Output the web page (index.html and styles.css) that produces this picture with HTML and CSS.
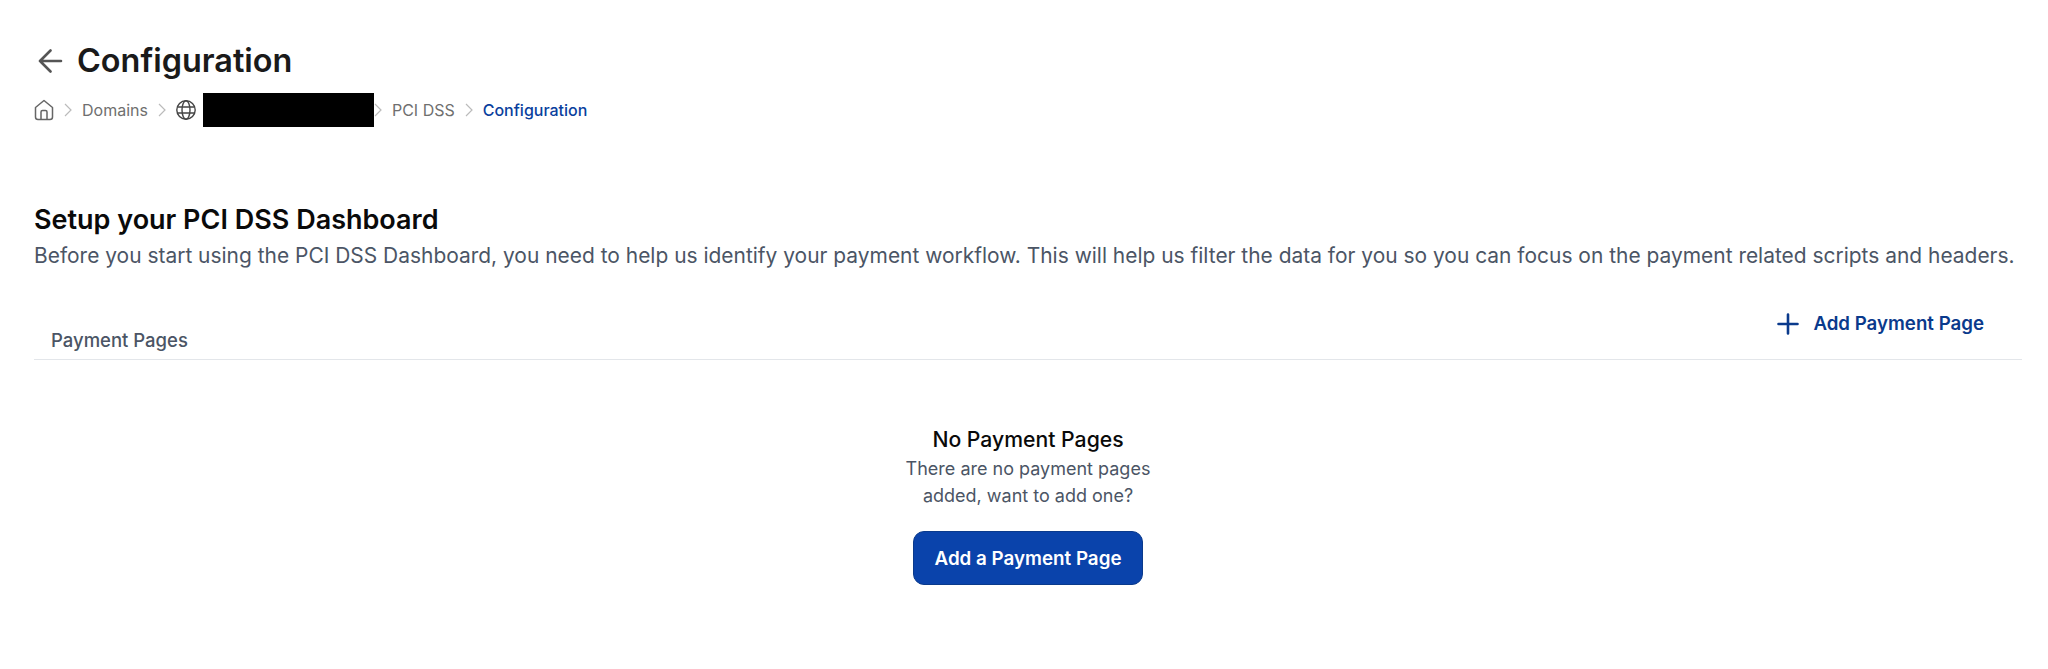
FILE: index.html
```html
<!DOCTYPE html>
<html lang="en">
<head>
  <meta charset="UTF-8">
  <title>Configuration</title>
  <link rel="stylesheet" href="styles.css">
</head>
<body>
  <div class="page">
    <div class="title-row">
      <svg class="back" viewBox="0 0 26 24" fill="none" stroke="#555" stroke-width="2.6" stroke-linecap="round" stroke-linejoin="round"><path d="M23 12H2M12.5 1.5 2 12l10.5 10.5"/></svg>
      <h1>Configuration</h1>
    </div>
    <div class="crumbs">
      <svg class="home" viewBox="0 0 20 22" fill="none" stroke="#666" stroke-width="1.5" stroke-linejoin="round"><path d="M1.5 8.5 10 1.5l8.5 7V18a2.5 2.5 0 0 1-2.5 2.5H4A2.5 2.5 0 0 1 1.5 18z"/><path d="M7 20.5V13a1.5 1.5 0 0 1 1.5-1.5h3A1.5 1.5 0 0 1 13 13v7.5"/></svg>
      <svg class="sep" viewBox="0 0 8 14" fill="none" stroke="#bbb" stroke-width="1.2"><path d="m1 1 6 6-6 6"/></svg>
      <span>Domains</span>
      <svg class="sep" viewBox="0 0 8 14" fill="none" stroke="#bbb" stroke-width="1.2"><path d="m1 1 6 6-6 6"/></svg>
      <svg class="globe" viewBox="0 0 20 20" fill="none" stroke="#444" stroke-width="1.4"><circle cx="10" cy="10" r="9.2"/><ellipse cx="10" cy="10" rx="4" ry="9.2"/><path d="M1.5 7h17M1.5 13h17"/></svg>
      <span class="redacted"></span>
      <svg class="sep tight" viewBox="0 0 8 14" fill="none" stroke="#bbb" stroke-width="1.2"><path d="m1 1 6 6-6 6"/></svg>
      <span>PCI DSS</span>
      <svg class="sep" viewBox="0 0 8 14" fill="none" stroke="#bbb" stroke-width="1.2"><path d="m1 1 6 6-6 6"/></svg>
      <span class="current">Configuration</span>
    </div>

    <h2>Setup your PCI DSS Dashboard</h2>
    <p class="intro">Before you start using the PCI DSS Dashboard, you need to help us identify your payment workflow. This will help us filter the data for you so you can focus on the payment related scripts and headers.</p>

    <div class="tab-row">
      <span class="tab">Payment Pages</span>
      <a class="add-link">
        <svg viewBox="0 0 22 22" fill="none" stroke="#0a3a8c" stroke-width="2.6" stroke-linecap="round"><path d="M11 1.5v19M1.5 11h19"/></svg>
        Add Payment Page
      </a>
    </div>

    <div class="empty">
      <h3>No Payment Pages</h3>
      <p>There are no payment pages<br>added, want to add one?</p>
      <button class="btn">Add a Payment Page</button>
    </div>
  </div>
</body>
</html>
```

FILE: styles.css
```css
*{margin:0;padding:0;box-sizing:border-box;}
html,body{width:100%;height:100%;background:#fff;overflow:hidden;}
body{font-family:"Inter","Liberation Sans",sans-serif;color:#111;}
.page{padding:42px 26px 0 34px;}
.title-row{display:flex;align-items:center;gap:13px;height:38px;padding-left:4px;}
.back{width:26px;height:24px;}
h1{font-size:32.4px;line-height:38px;font-weight:600;color:#1a1a1a;}
.crumbs{display:flex;align-items:center;height:34px;margin-top:13px;font-size:16px;color:#6f6f6f;}
.home{width:20px;height:22px;}
.sep{width:8px;height:14px;margin:0 10px;}
.sep.tight{margin:0 10px 0 0;}
.globe{width:20px;height:20px;margin-right:7px;}
.redacted{width:171px;height:34px;background:#000;}
.current{color:#0a3f9e;font-weight:500;}
h2{font-size:27px;line-height:32px;font-weight:600;color:#0a0a0a;margin-top:77px;}
.intro{font-size:20.95px;line-height:30px;color:#4b5565;white-space:nowrap;margin-top:5px;}
.tab-row{display:flex;justify-content:space-between;align-items:flex-start;height:54px;margin-top:35px;border-bottom:1px solid #e3e6ea;}
.tab{font-size:18.5px;line-height:24px;color:#4b5565;font-weight:500;padding:22px 0 0 17px;}
.add-link{display:flex;align-items:center;gap:14px;font-size:18.7px;line-height:24px;font-weight:600;color:#0a3a8c;padding:6px 38px 0 0;}
.add-link svg{width:22px;height:22px;}
.empty{display:flex;flex-direction:column;align-items:center;margin-top:65px;}
h3{font-size:21.2px;line-height:28px;font-weight:500;color:#0a0a0a;}
.empty p{font-size:18px;line-height:27px;color:#4b5565;text-align:center;margin-top:2px;}
.btn{width:230px;height:54px;margin-top:22px;border:1px solid #0a3a8c;border-radius:11px;background:#0a43ab;color:#fff;font:600 18.8px "Inter","Liberation Sans",sans-serif;}
```
